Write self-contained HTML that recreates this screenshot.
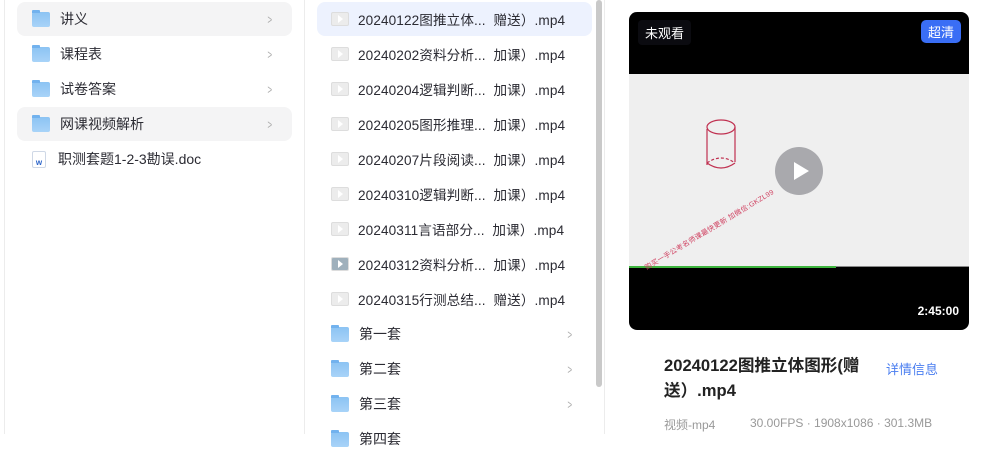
<!DOCTYPE html>
<html><head><meta charset="utf-8"><style>
*{margin:0;padding:0;box-sizing:border-box}
body{width:981px;height:434px;overflow:hidden;background:#fff;font-family:"Liberation Sans","Noto Sans CJK SC",sans-serif;color:#2b2b33;position:relative}
.vl{position:absolute;top:0;width:1px;height:434px;background:#ececec}
.row{position:absolute;height:34px;display:flex;align-items:center;font-size:14px;border-radius:8px;white-space:nowrap}
.row.sel{background:#f4f4f5}
.row.act{background:#edf2fe}
.vid{font-size:13.6px;letter-spacing:.1px}
.fold{width:18px;height:15px;border-radius:2px;background:linear-gradient(#8cc3f3,#a8d3f8);position:relative;margin-right:10px}
.fold:before{content:"";position:absolute;left:0;top:-2px;width:8px;height:3px;background:#72b2ee;border-radius:1px 1px 0 0}
.chev{position:absolute;right:18px;color:#aaa;font-size:13px;transform:scaleX(.6)}
.th{width:18px;height:14px;background:#ececec;border:1px solid #ddd;border-radius:2px;margin-right:9px;position:relative;flex:none}
.th:after{content:"";position:absolute;left:6px;top:2px;border-left:5px solid #fff;border-top:4px solid transparent;border-bottom:4px solid transparent}
</style></head><body>
<div class="vl" style="left:4px"></div>
<div class="vl" style="left:304px"></div>
<div class="vl" style="left:604px"></div>
<div style="position:absolute;left:596px;top:0;width:6px;height:387px;background:#c9c9c9;border-radius:3px"></div>

<div class="row sel" style="left:17px;top:2px;width:275px;padding-left:15px"><div class="fold"></div>讲义<span class="chev">&gt;</span></div>
<div class="row" style="left:17px;top:37px;width:275px;padding-left:15px"><div class="fold"></div>课程表<span class="chev">&gt;</span></div>
<div class="row" style="left:17px;top:72px;width:275px;padding-left:15px"><div class="fold"></div>试卷答案<span class="chev">&gt;</span></div>
<div class="row sel" style="left:17px;top:107px;width:275px;padding-left:15px"><div class="fold"></div>网课视频解析<span class="chev">&gt;</span></div>
<div class="row" style="left:17px;top:142px;width:275px;padding-left:15px"><div style="width:14px;height:17px;border:1px solid #cfd8e6;border-radius:2px;margin-right:12px;font-size:8px;color:#2a63c9;font-weight:bold;padding-top:6px;text-align:center">w</div>职测套题1-2-3勘误.doc</div>

<div class="row act vid" style="left:317px;top:2px;width:275px;padding-left:14px"><div class="th"></div>20240122图推立体...&nbsp;&nbsp;赠送）.mp4</div>
<div class="row vid" style="left:317px;top:37px;width:275px;padding-left:14px"><div class="th"></div>20240202资料分析...&nbsp;&nbsp;加课）.mp4</div>
<div class="row vid" style="left:317px;top:72px;width:275px;padding-left:14px"><div class="th"></div>20240204逻辑判断...&nbsp;&nbsp;加课）.mp4</div>
<div class="row vid" style="left:317px;top:107px;width:275px;padding-left:14px"><div class="th"></div>20240205图形推理...&nbsp;&nbsp;加课）.mp4</div>
<div class="row vid" style="left:317px;top:142px;width:275px;padding-left:14px"><div class="th"></div>20240207片段阅读...&nbsp;&nbsp;加课）.mp4</div>
<div class="row vid" style="left:317px;top:177px;width:275px;padding-left:14px"><div class="th"></div>20240310逻辑判断...&nbsp;&nbsp;加课）.mp4</div>
<div class="row vid" style="left:317px;top:212px;width:275px;padding-left:14px"><div class="th"></div>20240311言语部分...&nbsp;&nbsp;加课）.mp4</div>
<div class="row vid" style="left:317px;top:247px;width:275px;padding-left:14px"><div class="th" style="background:#9fb0bc"></div>20240312资料分析...&nbsp;&nbsp;加课）.mp4</div>
<div class="row vid" style="left:317px;top:282px;width:275px;padding-left:14px"><div class="th"></div>20240315行测总结...&nbsp;&nbsp;赠送）.mp4</div>
<div class="row" style="left:317px;top:317px;width:275px;padding-left:14px"><div class="fold"></div>第一套<span class="chev">&gt;</span></div>
<div class="row" style="left:317px;top:352px;width:275px;padding-left:14px"><div class="fold"></div>第二套<span class="chev">&gt;</span></div>
<div class="row" style="left:317px;top:387px;width:275px;padding-left:14px"><div class="fold"></div>第三套<span class="chev">&gt;</span></div>
<div class="row" style="left:317px;top:422px;width:275px;padding-left:14px"><div class="fold"></div>第四套</div>

<div style="position:absolute;left:629px;top:12px;width:340px;height:318px;background:#000;border-radius:8px;overflow:hidden">
 <div style="position:absolute;left:0;top:62px;width:340px;height:193px;background:#efefef"></div>
 <div style="position:absolute;left:0;top:254px;width:207px;height:2px;background:#3fb53f"></div>
 <div style="position:absolute;top:254px;left:207px;width:133px;height:1px;background:#888"></div>
 <svg style="position:absolute;left:75px;top:105px" width="40" height="60"><g fill="none" stroke="#c03050" stroke-width="1.2"><ellipse cx="17" cy="10" rx="14" ry="7"/><path d="M3 12V48M31 10V45"/><path d="M3 46Q17 56 31 46" /><path d="M3 46Q17 36 31 46" stroke-dasharray="3 2"/></g></svg>
 <div style="position:absolute;left:14px;top:252px;font-size:7px;letter-spacing:.3px;color:#d04060;transform:rotate(-31deg);transform-origin:left top;white-space:nowrap">购买一手公考名师课最快更新 加微信:GKZL99</div>
 <div style="position:absolute;left:146px;top:135px;width:48px;height:48px;border-radius:50%;background:#a9a9ad"></div>
 <div style="position:absolute;left:165px;top:150px;border-left:15px solid #fff;border-top:9px solid transparent;border-bottom:9px solid transparent"></div>
 <div style="position:absolute;left:9px;top:8px;padding:3px 7px;background:#0b0b10;color:#fff;font-size:13px;border-radius:4px">未观看</div>
 <div style="position:absolute;right:8px;top:8px;padding:2px 7px;background:#3a6ef5;color:#fff;font-size:13px;border-radius:5px">超清</div>
 <div style="position:absolute;right:10px;top:292px;color:#fff;font-size:12px;font-weight:bold">2:45:00</div>
</div>

<div style="position:absolute;left:664px;top:353px;width:215px;font-size:16.6px;font-weight:bold;line-height:25px;color:#222">20240122图推立体图形(赠送）.mp4</div>
<div style="position:absolute;left:886px;top:359px;font-size:13px;color:#4a7ef0">详情信息</div>
<div style="position:absolute;left:664px;top:416px;font-size:12px;color:#999">视频-mp4</div>
<div style="position:absolute;left:750px;top:416px;font-size:12px;color:#999">30.00FPS · 1908x1086 · 301.3MB</div>
</body></html>
